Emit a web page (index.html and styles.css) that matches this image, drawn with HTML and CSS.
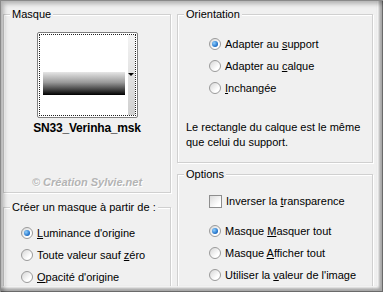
FILE: index.html
```html
<!DOCTYPE html>
<html lang="fr">
<head>
    <meta charset="UTF-8">
    <title>Masque</title>
    <link rel="stylesheet" href="styles.css">
</head>
<body>
    <div class="dialog">
        <!-- Colonne gauche -->
        <div class="col col-left">
            <fieldset class="group group-mask">
                <legend>Masque</legend>
                <div class="group-body">
                    <div class="thumb">
                        <div class="thumb-inner">
                            <div class="thumb-image"><div class="gradient"></div></div>
                            <div class="thumb-scroll"><span class="arrow"></span></div>
                        </div>
                    </div>
                    <div class="mask-name">SN33_Verinha_msk</div>
                    <div class="watermark">© Création Sylvie.net</div>
                </div>
            </fieldset>

            <fieldset class="group group-source">
                <legend>Créer un masque à partir de :</legend>
                <div class="group-body">
                    <label class="opt"><span class="radio checked"></span><span><u>L</u>uminance d'origine</span></label>
                    <label class="opt"><span class="radio"></span><span>Toute valeur sauf <u>z</u>éro</span></label>
                    <label class="opt"><span class="radio"></span><span><u>O</u>pacité d'origine</span></label>
                </div>
            </fieldset>
        </div>

        <!-- Colonne droite -->
        <div class="col col-right">
            <fieldset class="group group-orient">
                <legend>Orientation</legend>
                <div class="group-body">
                    <label class="opt"><span class="radio checked"></span><span>Adapter au <u>s</u>upport</span></label>
                    <label class="opt"><span class="radio"></span><span>Adapter au <u>c</u>alque</span></label>
                    <label class="opt"><span class="radio"></span><span><u>I</u>nchangée</span></label>
                    <p class="desc">Le rectangle du calque est le même<br>que celui du support.</p>
                </div>
            </fieldset>

            <fieldset class="group group-options">
                <legend>Options</legend>
                <div class="group-body">
                    <label class="opt opt-check"><span class="check"></span><span>Inverser la <u>t</u>ransparence</span></label>
                    <div class="opt-list">
                        <label class="opt"><span class="radio checked"></span><span>Masque <u>M</u>asquer tout</span></label>
                        <label class="opt"><span class="radio"></span><span>Masque <u>A</u>fficher tout</span></label>
                        <label class="opt"><span class="radio"></span><span>Utiliser la <u>v</u>aleur de l'image</span></label>
                    </div>
                </div>
            </fieldset>
        </div>
    </div>
</body>
</html>
```

FILE: styles.css
```css
/* Global */
body {
    margin: 0;
    font-family: 'Liberation Sans', Arial, sans-serif;
    font-size: 11px;
    color: #000;
    background: #f0f0f0;
}

/* Cadre de la capture */
.dialog {
    width: 383px;
    height: 292px;
    box-sizing: border-box;
    padding: 8px 10px 0 3px;
    display: flex;
    gap: 6px;
    overflow: hidden;
    background: #f0f0f0;
    position: relative;
}

/* Biseau par-dessus le contenu */
.dialog::after {
    content: "";
    position: absolute;
    inset: 0;
    pointer-events: none;
    box-shadow:
        inset 1px 1px 0 #8a8a8a,
        inset 5px 5px 4px -1px rgba(0, 0, 0, 0.25),
        inset -1px -1px 0 #6a6a6a,
        inset -6px -6px 3px -2px rgba(0, 0, 0, 0.35),
        inset -7px -7px 0 -1px rgba(255, 255, 255, 0.9);
}

.col {
    display: flex;
    flex-direction: column;
}

.col-left {
    width: 168px;
}

.col-right {
    width: 196px;
}

/* Groupes */
.group {
    margin: 0;
    padding: 0;
    min-width: 0;
    border: 1px solid #d0d0d0;
    box-shadow: inset 1px 1px 0 #ffffff, 1px 1px 0 #ffffff;
}

.group legend {
    margin-left: 6px;
    padding: 0 2px;
    line-height: 13px;
    white-space: nowrap;
    background: #f0f0f0;
}

.group-mask {
    height: 185px;
    box-sizing: border-box;
}

.group-mask .group-body {
    text-align: center;
}

.group-source {
    margin-top: 8px;
    flex: 1;
}

.group-source .group-body {
    padding: 8px 0 0 17px;
}

.group-orient {
    height: 155px;
    box-sizing: border-box;
}

.group-orient .group-body {
    padding: 12px 0 0 31px;
}

.group-options {
    margin-top: 5px;
    flex: 1;
}

.group-options .group-body {
    padding: 9px 0 0 31px;
}

/* Vignette du masque */
.thumb {
    width: 101px;
    height: 86px;
    box-sizing: border-box;
    margin: 11px auto 0;
    border: 1px solid #7f7f7f;
    border-radius: 2px;
    padding: 1px;
    background: #ffffff;
}

.thumb-inner {
    height: 100%;
    box-sizing: border-box;
    border: 1px dotted #222;
    display: flex;
}

.thumb-image {
    flex: 1;
    padding: 37px 3px 0 3px;
}

.gradient {
    height: 23px;
    background: linear-gradient(to bottom, #e6e6e6 0%, #9a9a9a 45%, #3a3a3a 80%, #000 100%);
}

.thumb-scroll {
    width: 7px;
    background: linear-gradient(to bottom, #f4f4f4, #cfcfcf);
    display: flex;
    justify-content: center;
    padding-top: 38px;
    box-sizing: border-box;
}

.arrow {
    width: 0;
    height: 0;
    border-left: 3px solid transparent;
    border-right: 3px solid transparent;
    border-top: 3px solid #000;
}

.mask-name {
    margin-top: 3px;
    font-size: 12px;
    font-weight: bold;
    letter-spacing: -0.2px;
    line-height: 14px;
}

.watermark {
    margin-top: 41px;
    font-weight: bold;
    font-style: italic;
    color: #b4b4b4;
    text-shadow: 1px 1px 0 #ffffff;
    line-height: 13px;
}

/* Options */
.opt {
    display: flex;
    align-items: center;
    height: 22px;
    gap: 4px;
    white-space: nowrap;
}

.opt u {
    text-decoration: underline;
}

.radio {
    width: 10px;
    height: 10px;
    border: 1px solid #9a9a9a;
    border-radius: 50%;
    background: linear-gradient(135deg, #d6d6d6, #ffffff 70%);
    display: flex;
    align-items: center;
    justify-content: center;
    flex: none;
}

.radio.checked::after {
    content: "";
    width: 6px;
    height: 6px;
    border-radius: 50%;
    background: radial-gradient(circle at 35% 35%, #8fd0ff, #1c6cc4 70%, #0d4a96);
}

.check {
    width: 11px;
    height: 11px;
    border: 1px solid #8e8e8e;
    background: linear-gradient(135deg, #dcdcdc, #ffffff 75%);
    flex: none;
}

.opt-list {
    margin-top: 8px;
}

.desc {
    margin: 21px 0 0 -23px;
    line-height: 15px;
}
```
